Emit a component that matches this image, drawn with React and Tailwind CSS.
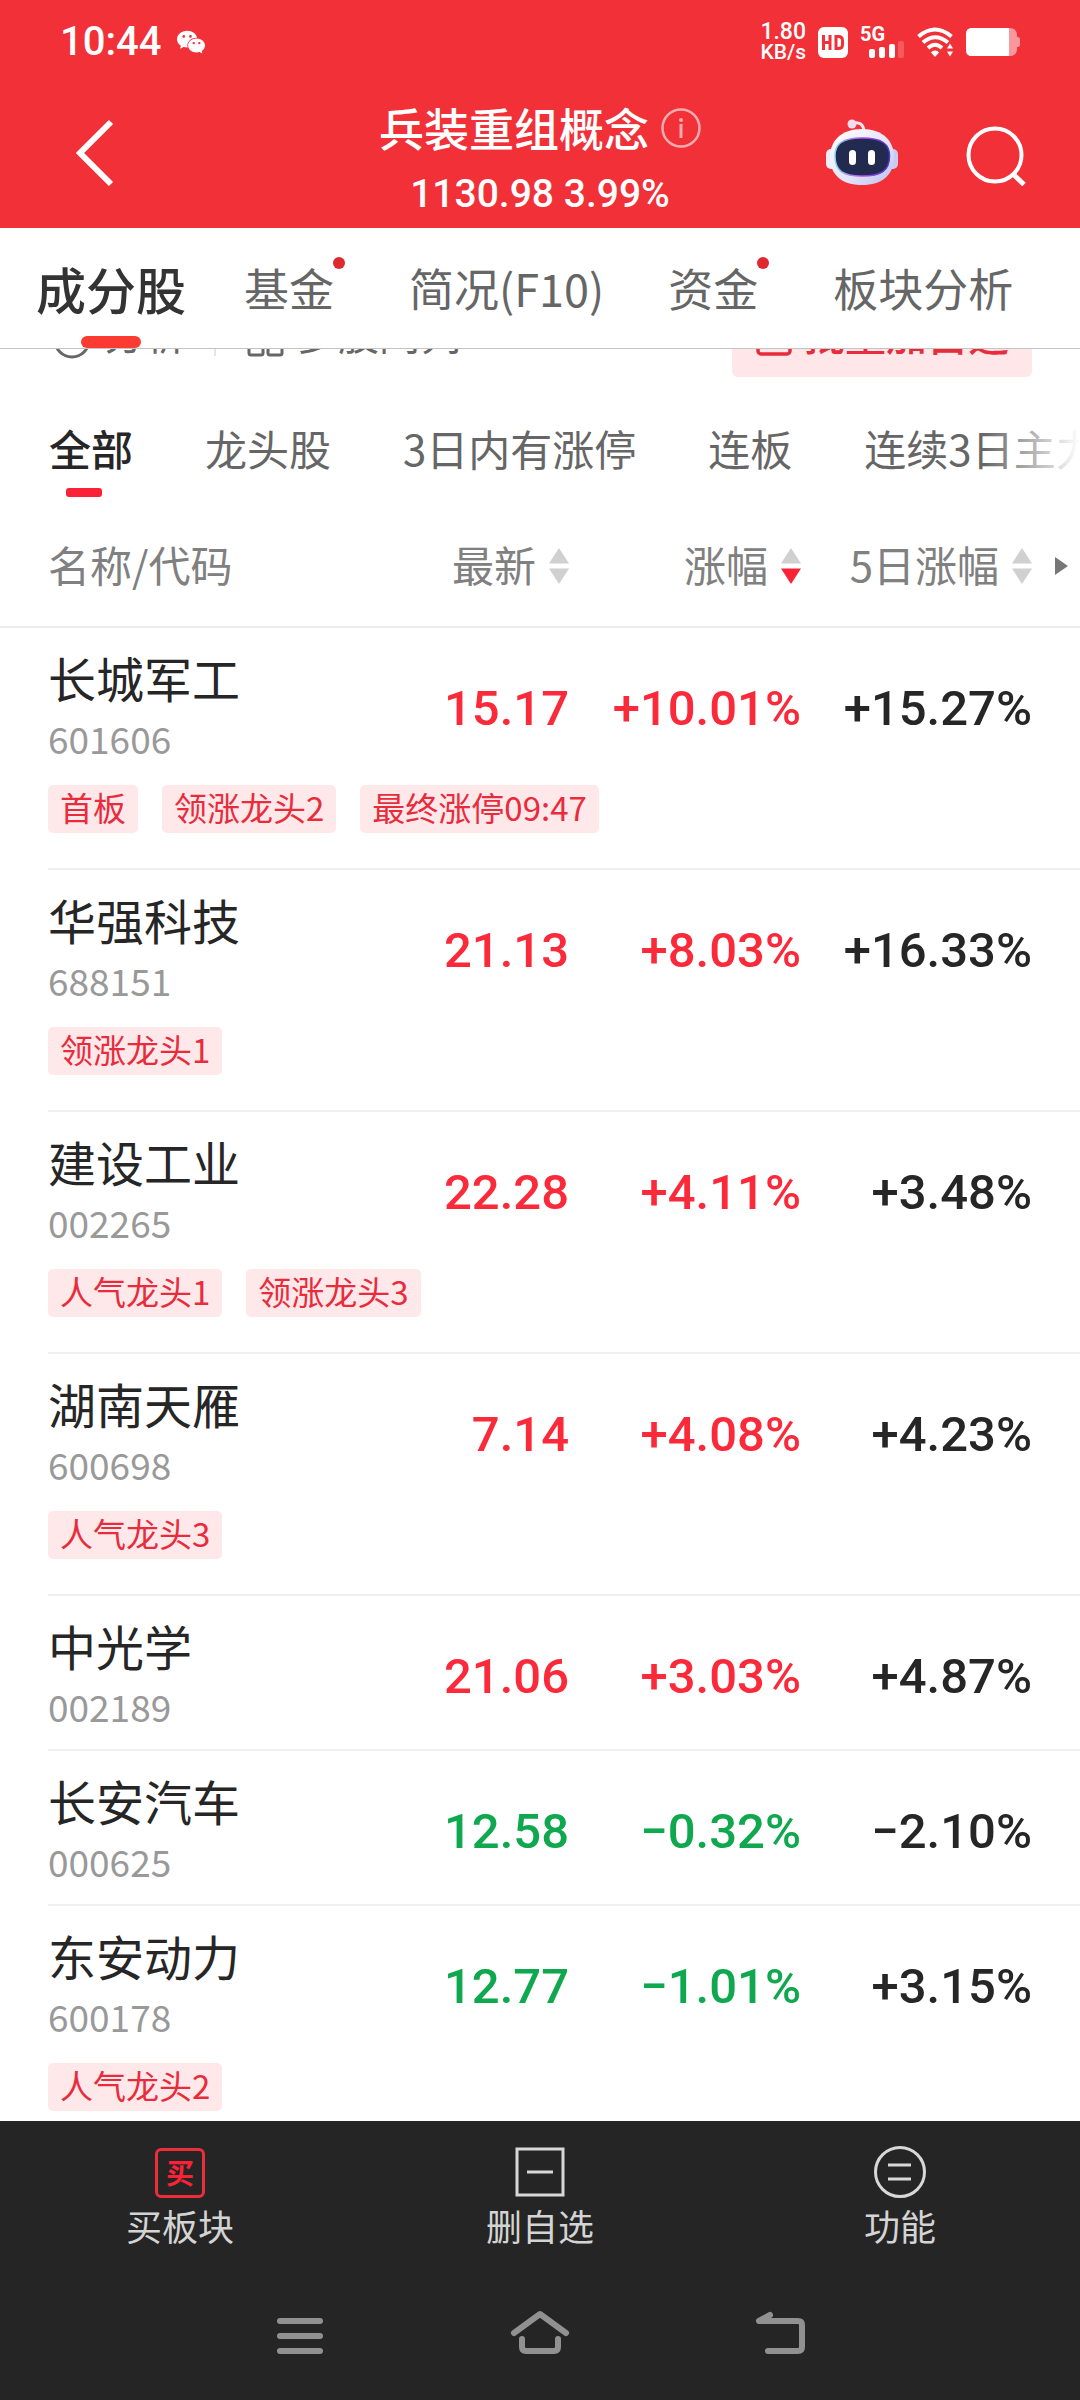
import { AiFillWechat } from "react-icons/ai";

const tabs = [
  { label: "成分股", active: true, space: "" },
  { label: "基金", dot: true, space: "ml-[58px]" },
  { label: "简况(F10)", space: "ml-[75px]" },
  { label: "资金", dot: true, space: "ml-[64px]" },
  { label: "板块分析", space: "ml-[75px]" },
];

const filters = ["全部", "龙头股", "3日内有涨停", "连板", "连续3日主力净流入"];

const stocks = [
  { name: "长城军工", code: "601606", price: "15.17", change: "+10.01%", five: "+15.27%", tags: ["首板", "领涨龙头2", "最终涨停09:47"] },
  { name: "华强科技", code: "688151", price: "21.13", change: "+8.03%", five: "+16.33%", tags: ["领涨龙头1"] },
  { name: "建设工业", code: "002265", price: "22.28", change: "+4.11%", five: "+3.48%", tags: ["人气龙头1", "领涨龙头3"] },
  { name: "湖南天雁", code: "600698", price: "7.14", change: "+4.08%", five: "+4.23%", tags: ["人气龙头3"] },
  { name: "中光学", code: "002189", price: "21.06", change: "+3.03%", five: "+4.87%", tags: [] },
  { name: "长安汽车", code: "000625", price: "12.58", change: "−0.32%", five: "−2.10%", tags: [] },
  { name: "东安动力", code: "600178", price: "12.77", change: "−1.01%", five: "+3.15%", tags: ["人气龙头2"] },
];

function StatusBar() {
  return (
    <div className="flex h-[78px] items-center justify-between pr-[60px] pl-[60px] pt-[6px] font-['Roboto',sans-serif]">
      <div className="flex items-center gap-[14px]">
        <span className="text-[40px] leading-none font-medium">10:44</span>
        <AiFillWechat className="size-8" />
      </div>
      <div className="flex items-center gap-3">
        <div className="text-right text-[23px] leading-5 font-medium">
          <div>1.80</div>
          <div className="text-[21px]">KB/s</div>
        </div>
        <svg width="30" height="31" viewBox="0 0 30 31" aria-label="HD">
          <rect width="30" height="31" rx="6" fill="#fff" />
          <path d="M5.500 8v15M12 8v15M5.500 15.500H12M18 9.500h2.500q4 0 4 4v4q0 4-4 4H18z" fill="none" stroke="#f13038" strokeWidth="3" />
        </svg>
        <div className="relative h-8 w-[45px]">
          <span className="absolute -top-0.5 left-0 text-[20px] leading-5 font-bold">5G</span>
          <svg className="absolute bottom-0 left-[9px]" width="36" height="18" viewBox="0 0 36 18" aria-hidden="true">
            <rect x="0" y="9" width="6" height="9" rx="2" fill="#fff" />
            <rect x="10" y="7" width="6" height="11" rx="2" fill="#fff" />
            <rect x="20" y="4" width="6" height="14" rx="2" fill="#fff" />
            <rect x="29" y="1" width="6" height="17" rx="2" fill="#fff" opacity=".2" />
          </svg>
        </div>
        <svg width="37" height="31" viewBox="0 0 37 31" aria-label="Wi-Fi">
          <g fill="none" stroke="#fff" strokeWidth="4">
            <path d="M1.500 9.500Q18 -4.500 34.500 9.500" />
            <path d="M6 15.500Q18 5 31 15.500" />
            <path d="M11 21Q18 14.500 25 21" />
          </g>
          <path d="M18 23.500q3 0 4 2L18 30l-4-4.500q1-2 4-2z" fill="#fff" />
          <path d="M30 21.500l3-5 3 5zM30 24.500l3 5 3-5z" fill="#fff" />
        </svg>
        <svg width="54" height="28" viewBox="0 0 54 28" aria-label="电量">
          <path d="M6 0h38q6 0 7 6v3q3 0 3 2v6q0 2-3 2v3q-1 6-7 6H6q-6 0-6-6V6q0-6 6-6z" fill="#fff" opacity=".5" />
          <path d="M6 0h37v28H6q-6 0-6-6V6q0-6 6-6z" fill="#fff" />
        </svg>
      </div>
    </div>
  );
}

function Robot() {
  return (
    <svg width="72" height="70" viewBox="0 0 72 70" aria-hidden="true">
      <defs>
        <linearGradient id="shell" x1="0" y1="0" x2="1" y2="1">
          <stop offset="0" stopColor="#ffffff" />
          <stop offset=".6" stopColor="#e4e2f8" />
          <stop offset="1" stopColor="#b9bdf0" />
        </linearGradient>
        <linearGradient id="rim" x1="0" y1="0" x2="1" y2="0">
          <stop offset="0" stopColor="#7fd6ee" />
          <stop offset=".5" stopColor="#b04be6" />
          <stop offset="1" stopColor="#4a35c9" />
        </linearGradient>
      </defs>
      <path d="M27 5q10-2 11 8" fill="none" stroke="#f6e4ee" strokeWidth="3" />
      <circle cx="26" cy="6" r="4.500" fill="#f0dcea" />
      <rect x="0" y="31" width="12" height="20" rx="5" fill="#eeedfb" />
      <rect x="60" y="31" width="12" height="20" rx="5" fill="#c9cbf2" />
      <path d="M36 11C57 11 68 23 68 39C68 57 56 67 36 67C16 67 4 57 4 39C4 23 15 11 36 11z" fill="url(#shell)" />
      <path d="M36 20C56 20 63.500 26 63.500 38C63.500 53 55 58 36 58C17 58 9 53 9 38C9 26 16 20 36 20z" fill="#222a50" stroke="url(#rim)" strokeWidth="1.500" />
      <rect x="23" y="32" width="7" height="15" rx="3.500" fill="#fff" />
      <rect x="42" y="32" width="7" height="15" rx="3.500" fill="#fff" />
    </svg>
  );
}

function Header() {
  return (
    <header className="shrink-0 bg-[#f13038] text-white">
      <StatusBar />
      <div className="grid h-[150px] grid-cols-[1fr_auto_1fr] items-center px-[54px]">
        <button type="button" aria-label="返回" className="justify-self-start pl-[22px]">
          <svg width="38" height="68" viewBox="0 0 38 68" fill="none" stroke="#fff" strokeWidth="6">
            <path d="M35 3L4 34l31 31" />
          </svg>
        </button>
        <div className="flex flex-col items-center gap-2 pt-[14px]">
          <div className="flex items-center gap-3">
            <h1 className="text-[45px] leading-[60px] font-medium whitespace-nowrap">兵装重组概念</h1>
            <button type="button" aria-label="说明" className="opacity-60">
              <svg width="40" height="40" viewBox="0 0 40 40" fill="none" stroke="#fff" strokeWidth="2.500">
                <circle cx="20" cy="20" r="18.500" />
                <path d="M20 16v14" strokeWidth="3" />
                <circle cx="20" cy="12" r="2" fill="#fff" stroke="none" />
              </svg>
            </button>
          </div>
          <p className="font-['Roboto',sans-serif] text-[39px] leading-[56px] font-medium whitespace-nowrap">1130.98 3.99%</p>
        </div>
        <div className="flex items-center gap-[68px] justify-self-end">
          <button type="button" aria-label="智能助手">
            <Robot />
          </button>
          <button type="button" aria-label="搜索" className="pt-1">
            <svg width="60" height="61" viewBox="0 0 60 61" fill="none" stroke="#fff" strokeWidth="4">
              <circle cx="29" cy="30" r="26.500" />
              <path d="M47 49l11 10.500" strokeWidth="5" />
            </svg>
          </button>
        </div>
      </div>
    </header>
  );
}

function Tabs() {
  return (
    <nav className="flex h-[121px] shrink-0 items-stretch border-b border-[#c4c4c4] pl-[36px] whitespace-nowrap">
      {tabs.map((tab) => (
        <a key={tab.label} href="#" className={`relative flex items-center ${tab.space} ${tab.active ? "text-[50px] font-medium text-[#333]" : "text-[45px] text-[#666]"}`}>
          {tab.label}
          {tab.dot && <span className="absolute top-[29px] -right-[11px] size-3 rounded-full bg-[#e0292f]" />}
          {tab.active && <span className="absolute bottom-0 left-[45px] h-3 w-[60px] rounded-full bg-[#fb3b31]" />}
        </a>
      ))}
    </nav>
  );
}

function Toolbar() {
  return (
    <div className="flex h-7 shrink-0 items-end justify-between overflow-hidden pr-12 pl-[54px] text-[41px] leading-[60px] whitespace-nowrap text-[#666]">
      <div className="flex items-center pb-[15px]">
        <button type="button" className="flex items-center gap-3">
          <svg width="38" height="54" viewBox="0 0 38 54" fill="none" stroke="#666" strokeWidth="3" aria-hidden="true">
            <circle cx="18" cy="35" r="17" />
            <path d="M18 35V24M18 35l8 -6" />
          </svg>
          分析
        </button>
        <span className="ml-[28px] h-[48px] w-0.5 bg-[#e5e5e5]" />
        <button type="button" className="ml-[31px] flex items-center gap-3">
          <svg width="38" height="54" viewBox="0 0 38 54" fill="none" stroke="#666" strokeWidth="3" aria-hidden="true">
            <rect x="11" y="18" width="15" height="13" rx="2" />
            <rect x="2" y="35" width="14" height="15" rx="2" />
            <rect x="21" y="35" width="14" height="15" rx="2" />
          </svg>
          多股同列
        </button>
      </div>
      <button type="button" className="flex h-[88px] w-[300px] items-center gap-3 rounded-md bg-[#ffe7e9] pl-6 font-medium text-[#e82c3c]">
        <svg width="36" height="48" viewBox="0 0 36 48" fill="none" stroke="#e82c3c" strokeWidth="3.500" aria-hidden="true">
          <rect x="2" y="13" width="32" height="32" rx="3" />
          <path d="M18 20v14M10 27h16" />
        </svg>
        批量加自选
      </button>
    </div>
  );
}

function Filters() {
  return (
    <nav className="relative flex h-[128px] shrink-0 items-center gap-[72px] overflow-hidden pt-[14px] pl-[49px] text-[42px] leading-[60px] whitespace-nowrap text-[#666]">
      {filters.map((label, i) => (
        <button key={label} type="button" className={i === 0 ? "relative font-medium text-[#262626]" : "relative"}>
          {label}
          {i === 0 && <span className="absolute -bottom-[19px] left-[17px] h-[9px] w-9 rounded-[3px] bg-[#fb2238]" />}
        </button>
      ))}
      <div className="absolute inset-y-0 right-0 w-24 bg-linear-to-r from-white/0 to-white" />
    </nav>
  );
}

function Sorter({ label, down }) {
  return (
    <button type="button" className="inline-flex items-center gap-[13px]">
      <span className="pb-1">{label}</span>
      <svg width="20" height="36" viewBox="0 0 20 36" aria-hidden="true">
        <path d="M0 15.500L10 0l10 15.500z" fill="#d0d0d0" />
        <path d="M0 20.500L10 36l10-15.500z" fill={down ? "#fb2238" : "#d0d0d0"} />
      </svg>
    </button>
  );
}

function StockTable() {
  return (
    <div className="min-h-0 flex-1 overflow-hidden pl-12">
      <table className="w-full table-fixed border-separate border-spacing-0 whitespace-nowrap">
        <thead>
          <tr className="h-[123px] text-[42px] text-[#808080] *:border-b-2 *:border-[#ececec] *:font-normal">
            <th scope="col" className="relative p-0 pb-1 text-left before:absolute before:-bottom-0.5 before:-left-12 before:h-0.5 before:w-12 before:bg-[#ececec]">
              名称/代码
            </th>
            <th scope="col" className="w-[232px] p-0 text-right">
              <Sorter label="最新" />
            </th>
            <th scope="col" className="w-[232px] p-0 text-right">
              <Sorter label="涨幅" down />
            </th>
            <th scope="col" className="w-[279px] p-0">
              <div className="flex items-center justify-end gap-[23px] pr-3">
                <Sorter label="5日涨幅" />
                <svg width="13" height="18" viewBox="0 0 13 18" aria-hidden="true">
                  <path d="M0 0l13 9-13 9z" fill="#777" />
                </svg>
              </div>
            </th>
          </tr>
        </thead>
        <tbody>
          {stocks.map((s) => {
            const tone = s.change.startsWith("+") ? "text-[#fb2a3a]" : "text-[#0fa84f]";
            return (
              <tr key={s.code} className="align-top *:border-b-2 *:border-[#efefef] *:p-0">
                <th scope="row" className="text-left font-normal">
                  <div className="pt-[19px] pb-[21px]">
                    <div className="text-[48px] leading-[60px] text-[#262626]">{s.name}</div>
                    <div className="mt-[9px] text-[37px] leading-[44px] text-[#999]">{s.code}</div>
                    {s.tags.length > 0 && (
                      <ul className="mt-[25px] mb-[14px] flex gap-6">
                        {s.tags.map((tag) => (
                          <li key={tag} className="rounded-[5px] bg-[#ffe8ea] px-3 pb-1 text-[33px] leading-[44px] text-[#e82c3c]">
                            {tag}
                          </li>
                        ))}
                      </ul>
                    )}
                  </div>
                </th>
                <td className={`text-right font-['Roboto',sans-serif] text-[49px] font-medium ${tone}`}>
                  <div className="pt-[51px] leading-[60px]">{s.price}</div>
                </td>
                <td className={`text-right font-['Roboto',sans-serif] text-[49px] font-medium ${tone}`}>
                  <div className="pt-[51px] leading-[60px]">{s.change}</div>
                </td>
                <td className="text-right font-['Roboto',sans-serif] text-[49px] font-medium text-[#262626]">
                  <div className="pt-[51px] pr-12 leading-[60px]">{s.five}</div>
                </td>
              </tr>
            );
          })}
        </tbody>
      </table>
    </div>
  );
}

function BottomBar() {
  const item = "flex flex-col items-center text-[36px] leading-[54px] text-[#d4d4d4]";
  return (
    <footer className="shrink-0 bg-[#252525]">
      <div className="grid grid-cols-3 pt-[25px]">
        <button type="button" className={item}>
          <span className="flex size-[52px] items-end justify-center">
            <span className="flex size-[50px] items-center justify-center rounded-md border-[3px] border-[#ea2f3b] pb-0.5 text-[28px] leading-none font-bold text-[#fb2238]" aria-hidden="true">
              买
            </span>
          </span>
          买板块
        </button>
        <button type="button" className={item}>
          <svg width="52" height="52" viewBox="0 0 52 52" fill="none" stroke="#d8d8d8" strokeWidth="3" aria-hidden="true">
            <path d="M3 3h46v46H3zM13 26h26" />
          </svg>
          删自选
        </button>
        <button type="button" className={item}>
          <svg width="52" height="52" viewBox="0 0 52 52" fill="none" stroke="#d8d8d8" strokeWidth="3" aria-hidden="true">
            <circle cx="26" cy="26" r="24.500" />
            <path d="M14 19h23M14 33h23" />
          </svg>
          功能
        </button>
      </div>
      <div className="flex h-[148px] items-center justify-center gap-[180px] pt-[14px]">
        <button type="button" aria-label="最近任务">
          <svg width="60" height="48" viewBox="0 0 60 48" fill="none" stroke="#919191" strokeWidth="6" strokeLinecap="round">
            <path d="M10 12h40M10 27h40M10 42h40" />
          </svg>
        </button>
        <button type="button" aria-label="主屏幕">
          <svg width="60" height="48" viewBox="0 0 60 48" fill="none" stroke="#919191" strokeWidth="6" strokeLinecap="round" strokeLinejoin="round">
            <path d="M4 24L30 5l26 19M12 30v8q0 4 4 4h28q4 0 4-4v-8" />
          </svg>
        </button>
        <button type="button" aria-label="返回上一页">
          <svg width="60" height="48" viewBox="0 0 60 48" fill="none" stroke="#919191" strokeWidth="6" strokeLinecap="round" strokeLinejoin="round">
            <path d="M20 6L9 12h39q4 0 4 4v22q0 4-4 4H18" />
          </svg>
        </button>
      </div>
    </footer>
  );
}

export default function App() {
  return (
    <main className="flex h-screen flex-col overflow-hidden bg-white font-['Noto_Sans_CJK_SC',sans-serif]">
      <Header />
      <Tabs />
      <Toolbar />
      <Filters />
      <StockTable />
      <BottomBar />
    </main>
  );
}
